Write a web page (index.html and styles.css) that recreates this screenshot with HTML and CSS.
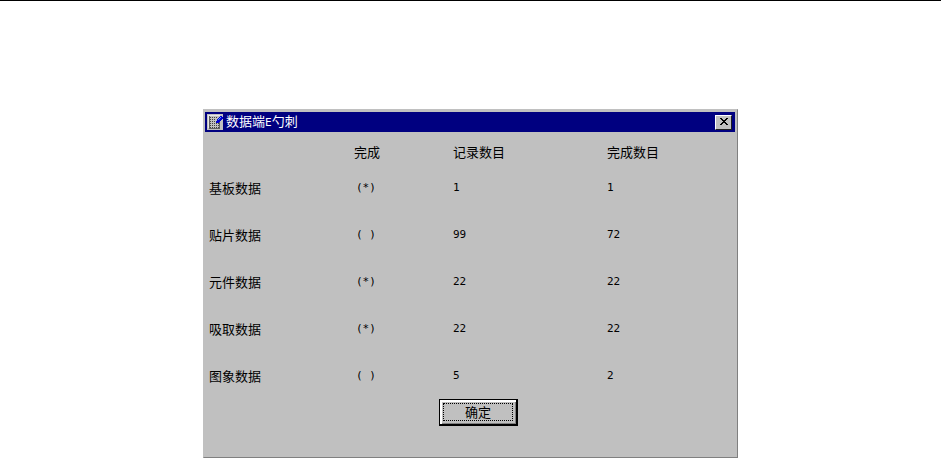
FILE: index.html
```
<!DOCTYPE html>
<html lang="zh-CN">
<head>
  <meta charset="utf-8">
  <title>数据</title>
  <link rel="stylesheet" href="styles.css">
</head>
<body>
  <main class="dialog">
    <header class="titlebar">
      <svg class="app-icon" width="16" height="16" viewBox="0 0 16 16" shape-rendering="crispEdges" aria-hidden="true">
        <path fill="#c0c0c0" d="M0 0h16v16H0z"/>
        <path fill="#e8e8e8" d="M1 1h12v1H1zM1 1h1v13H1z"/>
        <path stroke="#404040" stroke-dasharray="1 1" d="M3 3.500h7M3 5.500h6M3 7.500h5M3 9.500h9M3 11.500h9M3 13.500h9"/>
        <path fill="none" stroke="#606060" d="M2.500 2v12M2 14.500h11M12.500 8v7"/>
        <path fill="#0000d0" d="M9 7h1V5h1V4h1V3h1V2h2v1h1v2h-1v1h-1v1h-1v1h-1v1H9z"/>
        <path fill="#50a0ff" d="M11 6h1V5h1V4h1V3h-1v1h-1v1h-1z"/>
      </svg>
      <h1>数据端<small>E</small>勺刺</h1>
      <button class="close" type="button" aria-label="关闭">
        <svg width="10" height="8" viewBox="0 0 10 8" shape-rendering="crispEdges" aria-hidden="true">
          <path d="M1 0h2v1h1v1h2V1h1V0h2v1H8v1H7v1H6v1h1v1h1v1h1v1H7V6H6V5H4v1H3v1H1V6h1V5h1V4h1V3H3V2H2V1H1z"/>
        </svg>
      </button>
    </header>
    <table class="status">
      <thead>
        <tr><td></td><th scope="col">完成</th><th scope="col">记录数目</th><th scope="col">完成数目</th></tr>
      </thead>
      <tbody>
        <tr><th scope="row">基板数据</th><td class="mark">(*)</td><td>1</td><td>1</td></tr>
        <tr><th scope="row">贴片数据</th><td class="mark">( )</td><td>99</td><td>72</td></tr>
        <tr><th scope="row">元件数据</th><td class="mark">(*)</td><td>22</td><td>22</td></tr>
        <tr><th scope="row">吸取数据</th><td class="mark">(*)</td><td>22</td><td>22</td></tr>
        <tr><th scope="row">图象数据</th><td class="mark">( )</td><td>5</td><td>2</td></tr>
      </tbody>
    </table>
    <footer class="actions">
      <button class="ok" type="button"><span>确定</span></button>
    </footer>
  </main>
</body>
</html>
```

FILE: styles.css
```
* {
  box-sizing: border-box;
}
body {
  margin: 0;
  padding: 108px 203px 0;
  border-top: 1px solid #000;
  background: #fff;
  color: #000;
  font: 13px/16px "Noto Sans CJK SC", sans-serif;
}
.dialog {
  border: 1px solid #c0c0c0;
  border-right: 1px solid #808080;
  border-bottom: 1px solid #808080;
  background: #c0c0c0;
}

/* title bar */
.titlebar {
  display: flex;
  align-items: center;
  gap: 3px;
  height: 20px;
  margin: 2px 2px 0 1px;
  padding: 0 3px 0 2px;
  background: #000080;
  color: #fff;
}
.app-icon {
  flex: none;
}
h1 {
  flex: 1;
  margin: 0;
  padding-bottom: 2px;
  font: inherit;
}
h1 small {
  font: 11px "DejaVu Sans Mono", monospace;
}
.close {
  display: flex;
  align-items: center;
  justify-content: center;
  width: 17px;
  height: 15px;
  padding: 0;
  border: 1px solid;
  border-color: #fff #202020 #202020 #fff;
  background: #c0c0c0;
  color: #000;
}

/* data table */
.status {
  width: 100%;
  border-collapse: collapse;
  table-layout: fixed;
}
.status th,
.status td {
  padding: 0;
  text-align: left;
  font-weight: normal;
}
.status td {
  padding-top: 1px;
  font-family: "DejaVu Sans Mono", monospace;
  font-size: 11px;
}
.status thead tr {
  height: 32px;
}
.status tbody tr {
  height: 47px;
}
.status thead th {
  padding-top: 8px;
}
.status tr > :nth-child(1) {
  width: 150px;
  padding-left: 5px;
}
.status tr > :nth-child(2) {
  width: 99px;
}
.status tr > :nth-child(3) {
  width: 154px;
}
.status td.mark {
  padding-left: 2px;
}

/* buttons */
.actions {
  display: flex;
  justify-content: center;
  padding: 0 0 31px 16px;
}
.ok {
  width: 79px;
  height: 27px;
  padding: 2px;
  border: 1px solid #000;
  border-right-width: 2px;
  border-bottom-width: 2px;
  box-shadow: inset 2px 2px #fff, inset -1px -1px #808080;
  background: #c0c0c0;
  color: #000;
  font: inherit;
}
.ok span {
  display: block;
  margin: 1px;
  border: 1px dotted #000;
}
```
